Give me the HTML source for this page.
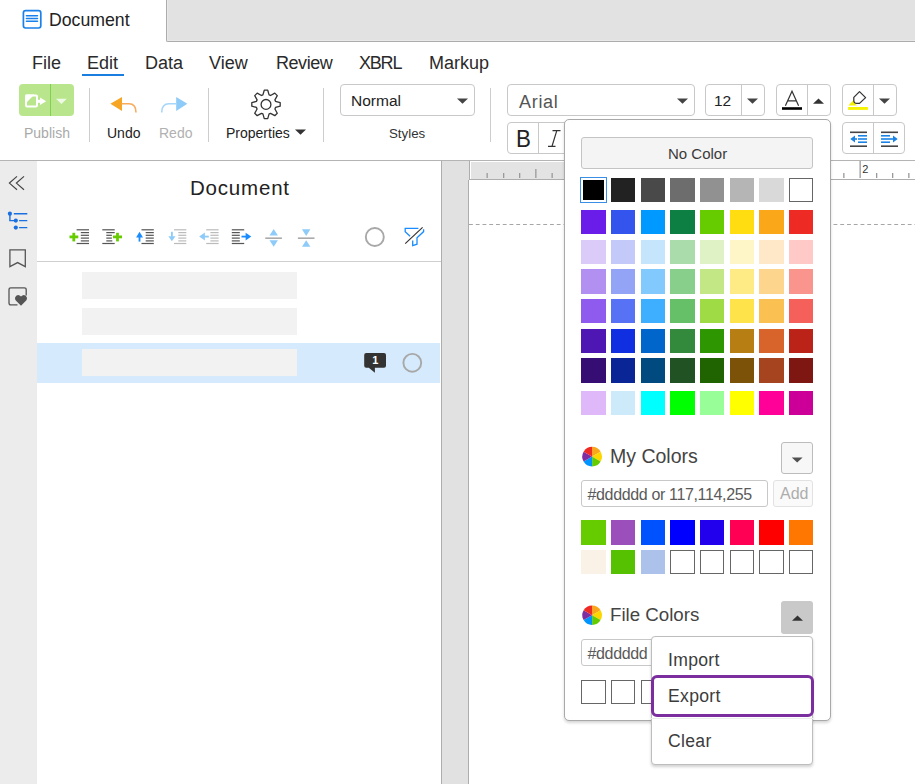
<!DOCTYPE html>
<html><head><meta charset="utf-8">
<style>
*{box-sizing:border-box;margin:0;padding:0}
html,body{width:915px;height:784px;overflow:hidden;background:#fff;font-family:"Liberation Sans",sans-serif;color:#222}
.a{position:absolute}
.t{position:absolute;white-space:nowrap;line-height:1}
.box{position:absolute;border:1px solid #c8c8c8;border-radius:4px;background:#fff}
.sep{position:absolute;width:1.4px;background:#cdcdcd}
.sw{position:absolute;width:25px;height:25px}
</style></head><body>

<!-- top tab strip -->
<div class="a" style="left:166px;top:0;width:749px;height:42px;background:#e2e2e2;border-left:1px solid #acacac;border-bottom:1px solid #acacac;border-bottom-left-radius:2px;box-shadow:inset 1px -1px 0 #e9e9e9"></div>
<svg class="a" style="left:18px;top:6px" width="28" height="26" viewBox="18 6 28 26">
<rect x="23.4" y="10.7" width="17.4" height="17.3" rx="2.2" fill="none" stroke="#1a80ea" stroke-width="1.7"/>
<path d="M26.4 15.8 L37.5 15.8 M26.4 18.6 L37.5 18.6 M26.4 21.3 L37.5 21.3" stroke="#1a80ea" stroke-width="1.5" stroke-linecap="round"/>
</svg>
<div class="t" style="left:49px;top:12px;font-size:17.7px;color:#222">Document</div>

<!-- menu -->
<div class="t" style="left:32px;top:54px;font-size:18px;color:#2a2a2a">File</div>
<div class="t" style="left:87px;top:54px;font-size:18px;color:#2a2a2a">Edit</div>
<div class="a" style="left:82px;top:74px;width:42px;height:2px;background:#1a7ee0"></div>
<div class="t" style="left:145px;top:54px;font-size:18px;color:#2a2a2a">Data</div>
<div class="t" style="left:209px;top:54px;font-size:18px;color:#2a2a2a">View</div>
<div class="t" style="left:276px;top:54px;font-size:18px;letter-spacing:-0.45px;color:#2a2a2a">Review</div>
<div class="t" style="left:359px;top:54px;font-size:18px;letter-spacing:-1.2px;color:#2a2a2a">XBRL</div>
<div class="t" style="left:429px;top:54px;font-size:18px;color:#2a2a2a">Markup</div>

<!-- toolbar -->
<div id="toolbar">
<!-- publish -->
<div class="a" style="left:19px;top:84px;width:55px;height:32px;background:#b9e68d;border-radius:4px"></div>
<div class="a" style="left:50px;top:84px;width:1px;height:32px;background:#7fd34c"></div>
<svg class="a" style="left:19px;top:84px" width="55" height="32" viewBox="0 0 55 32">
<rect x="7" y="11.4" width="11" height="11" rx="0.8" fill="none" stroke="#fff" stroke-width="2"/>
<path d="M6.5 19.4 L6.5 10.5 L15.4 10.5 Z" fill="#fff"/>
<rect x="18.5" y="15.8" width="3" height="3" fill="#fff"/>
<path d="M21 13.6 L27.2 17.3 L21 21 Z" fill="#fff"/>
<path d="M37 14.8 L47.8 14.8 L42.4 19.9 Z" fill="#eef9e6"/>
</svg>
<div class="t" style="left:24px;top:126px;font-size:14px;color:#a9a9a9">Publish</div>
<div class="sep" style="left:88.8px;top:88px;height:54px"></div>
<!-- undo redo -->
<svg class="a" style="left:105px;top:92px" width="90" height="24" viewBox="0 0 90 24">
<path d="M5.4 11.8 L17 5 L17 19 Z" fill="#f6a623"/>
<path d="M16.5 11.8 L24 11.8 Q31 11.8 31 20.5" fill="none" stroke="#f8ab5a" stroke-width="1.6"/>
<path d="M82.4 11.8 L71.2 5 L71.2 19 Z" fill="#8ecbf8"/>
<path d="M71.5 11.8 L64 11.8 Q56.7 11.8 56.7 20.5" fill="none" stroke="#a6d6fa" stroke-width="1.6"/>
</svg>
<div class="t" style="left:107px;top:126px;font-size:14px;color:#222">Undo</div>
<div class="t" style="left:159px;top:126px;font-size:14px;color:#b1b1b1">Redo</div>
<div class="sep" style="left:207.6px;top:88px;height:54px"></div>
<!-- properties -->
<svg class="a" style="left:246px;top:85px" width="40" height="40" viewBox="-20 -19.4 40 40">
<path d="M-3.09 -9.51 L-1.74 -14.19 L1.74 -14.19 L3.09 -9.51 A10.0 10.0 0 0 1 4.54 -8.91 L8.80 -11.27 L11.27 -8.80 L8.91 -4.54 A10.0 10.0 0 0 1 9.51 -3.09 L14.19 -1.74 L14.19 1.74 L9.51 3.09 A10.0 10.0 0 0 1 8.91 4.54 L11.27 8.80 L8.80 11.27 L4.54 8.91 A10.0 10.0 0 0 1 3.09 9.51 L1.74 14.19 L-1.74 14.19 L-3.09 9.51 A10.0 10.0 0 0 1 -4.54 8.91 L-8.80 11.27 L-11.27 8.80 L-8.91 4.54 A10.0 10.0 0 0 1 -9.51 3.09 L-14.19 1.74 L-14.19 -1.74 L-9.51 -3.09 A10.0 10.0 0 0 1 -8.91 -4.54 L-11.27 -8.80 L-8.80 -11.27 L-4.54 -8.91 A10.0 10.0 0 0 1 -3.09 -9.51Z" fill="none" stroke="#333" stroke-width="1.3" stroke-linejoin="round"/>
<circle cx="0" cy="0" r="4.9" fill="none" stroke="#333" stroke-width="1.3"/>
</svg>
<div class="t" style="left:226px;top:126px;font-size:14px;color:#222">Properties</div>
<svg class="a" style="left:294px;top:128px" width="13" height="8" viewBox="0 0 13 8"><path d="M1 1.5 L12 1.5 L6.5 6.8Z" fill="#333"/></svg>
<div class="sep" style="left:322.6px;top:88px;height:54px"></div>
<!-- styles -->
<div class="box" style="left:340px;top:84px;width:135px;height:32px"></div>
<div class="t" style="left:351px;top:92.5px;font-size:15.5px;color:#222">Normal</div>
<svg class="a" style="left:456px;top:97px" width="13" height="8" viewBox="0 0 13 8"><path d="M1 1.5 L12 1.5 L6.5 6.8Z" fill="#444"/></svg>
<div class="t" style="left:389px;top:127px;font-size:13.3px;color:#333">Styles</div>
<div class="sep" style="left:490px;top:88px;height:54px"></div>
<!-- font -->
<div class="box" style="left:507px;top:84px;width:188px;height:32px"></div>
<div class="t" style="left:519px;top:92.5px;font-size:18px;letter-spacing:0.7px;color:#555">Arial</div>
<svg class="a" style="left:676px;top:97px" width="13" height="8" viewBox="0 0 13 8"><path d="M1 1.5 L12 1.5 L6.5 6.8Z" fill="#444"/></svg>
<div class="box" style="left:705px;top:84px;width:60px;height:32px"></div>
<div class="a" style="left:741px;top:85px;width:1px;height:30px;background:#c8c8c8"></div>
<div class="t" style="left:714px;top:93px;font-size:15.5px;color:#222">12</div>
<svg class="a" style="left:746px;top:97px" width="13" height="8" viewBox="0 0 13 8"><path d="M1 1.5 L12 1.5 L6.5 6.8Z" fill="#444"/></svg>
<!-- font color -->
<div class="box" style="left:776px;top:84px;width:55px;height:32px"></div>
<div class="a" style="left:807px;top:85px;width:1px;height:30px;background:#c8c8c8"></div>
<svg class="a" style="left:780px;top:88px" width="26" height="24" viewBox="0 0 26 24">
<path d="M5.4 17.7 L12 3.2 L18.6 17.7 M7.7 12.9 L16.3 12.9" fill="none" stroke="#333" stroke-width="1.2"/>
<rect x="2" y="19.2" width="20" height="2.6" fill="#000"/>
</svg>
<svg class="a" style="left:812px;top:97px" width="13" height="8" viewBox="0 0 13 8"><path d="M1 6.8 L12 6.8 L6.5 1.6Z" fill="#333"/></svg>
<!-- highlight -->
<div class="box" style="left:842px;top:84px;width:55px;height:32px"></div>
<div class="a" style="left:873px;top:85px;width:1px;height:30px;background:#c8c8c8"></div>
<svg class="a" style="left:846px;top:88px" width="26" height="24" viewBox="0 0 26 24">
<path d="M2.4 17.6 L7.8 11.8 Q8.4 16.2 11.2 17.6 Z" fill="#f4f000"/>
<path d="M13.5 3.6 L19.6 9.6 L13.5 15.4 L10.9 15.4 Q7.8 15.4 7.8 12.2 L7.8 9.4 Z" fill="none" stroke="#333" stroke-width="1.25" stroke-linejoin="round"/>
<rect x="2.1" y="19" width="19.8" height="2.9" fill="#f6f300"/>
</svg>
<svg class="a" style="left:878px;top:97px" width="13" height="8" viewBox="0 0 13 8"><path d="M1 1.5 L12 1.5 L6.5 6.8Z" fill="#444"/></svg>
<!-- B I -->
<div class="box" style="left:507px;top:122px;width:80px;height:32px"></div>
<div class="a" style="left:538px;top:123px;width:1px;height:30px;background:#c8c8c8"></div>
<div class="t" style="left:515.8px;top:128.2px;font-size:23.5px;color:#222;transform:scaleX(0.95);transform-origin:0 0">B</div>
<svg class="a" style="left:545px;top:128px" width="20" height="22" viewBox="0 0 20 22">
<path d="M7.5 2.6 L15.5 2.6 M3 18.3 L10.5 18.3 M11.8 2.6 L7 18.3" fill="none" stroke="#333" stroke-width="1.2"/>
</svg>
<!-- indent -->
<div class="box" style="left:842px;top:122px;width:63px;height:32px"></div>
<div class="a" style="left:873px;top:123px;width:1px;height:30px;background:#c8c8c8"></div>
<svg class="a" style="left:842px;top:122px" width="63" height="32" viewBox="0 0 63 32">
<rect x="8" y="9.5" width="17" height="1.6" fill="#444"/>
<rect x="8" y="23.4" width="17" height="1.6" fill="#444"/>
<path d="M8.3 17 L13 13.6 L13 20.4Z" fill="#1a84e6"/>
<rect x="12" y="16.2" width="3" height="1.6" fill="#1a84e6"/>
<rect x="16" y="13" width="9" height="1.6" fill="#1a84e6"/>
<rect x="16" y="16.2" width="9" height="1.6" fill="#1a84e6"/>
<rect x="16" y="19.4" width="9" height="1.6" fill="#1a84e6"/>
<rect x="39" y="9.5" width="17" height="1.6" fill="#444"/>
<rect x="39" y="23.4" width="17" height="1.6" fill="#444"/>
<rect x="39" y="13" width="9" height="1.6" fill="#1a84e6"/>
<rect x="39" y="16.2" width="9" height="1.6" fill="#1a84e6"/>
<rect x="39" y="19.4" width="9" height="1.6" fill="#1a84e6"/>
<rect x="48" y="16.2" width="3" height="1.6" fill="#1a84e6"/>
<path d="M55.7 17 L51 13.6 L51 20.4Z" fill="#1a84e6"/>
</svg>
</div>

<!-- main border -->
<div class="a" style="left:0;top:160px;width:915px;height:1px;background:#b4b4b4"></div>
<!-- sidebar -->
<div class="a" style="left:0;top:161px;width:37px;height:623px;background:#ececec"></div>
<svg class="a" style="left:0;top:161px" width="37" height="160" viewBox="0 161 37 160">
<path d="M17 176.4 L9.4 183.1 L17 189.8 M24 176.4 L16.4 183.1 L24 189.8" fill="none" stroke="#444" stroke-width="1.2"/>
<g fill="#1a6fe0" stroke="#1a6fe0">
<circle cx="9.9" cy="213.7" r="2.1" stroke="none"/>
<circle cx="15.8" cy="220.6" r="2.1" stroke="none"/>
<circle cx="15.8" cy="227.6" r="2.1" stroke="none"/>
<path d="M13.8 213.7 L27.3 213.7 M19.1 220.6 L27.3 220.6 M19.1 227.6 L27.3 227.6 M9.9 213.7 L9.9 220.6 L15 220.6" fill="none" stroke-width="1.4"/>
</g>
<path d="M9.9 249.9 L25.3 249.9 L25.3 266.6 L17.6 262.6 L9.9 266.6 Z" fill="none" stroke="#555" stroke-width="1.3" stroke-linejoin="miter"/>
<path d="M17.5 304.9 L10.9 304.9 Q9 304.9 9 303 L9 289.7 Q9 287.9 10.9 287.9 L24.3 287.9 Q26.2 287.9 26.2 289.7 L26.2 295.5" fill="none" stroke="#555" stroke-width="1.3"/>
<path d="M21 305.8 L15.8 300.4 Q14.6 299 15.1 297.4 Q15.8 295.2 18.1 295.1 Q19.8 295.1 21 296.6 Q22.2 295.1 23.9 295.1 Q26.2 295.2 26.9 297.4 Q27.4 299 26.2 300.4 Z" fill="#555"/>
</svg>

<!-- panel -->
<div id="panel">
<div class="t" style="left:190px;top:177.5px;font-size:20.5px;letter-spacing:0.8px;color:#222">Document</div>
<svg class="a" style="left:37px;top:220px" width="403" height="32" viewBox="37 220 403 32">
<g fill="#555">
<rect x="76.6" y="229.2" width="12.4" height="1.2"/><rect x="80.8" y="232" width="8.2" height="1.2"/><rect x="80.8" y="234.7" width="8.2" height="1.2"/><rect x="80.8" y="237.5" width="8.2" height="1.2"/><rect x="80.8" y="240.3" width="8.2" height="1.2"/><rect x="76.6" y="242.9" width="12.4" height="1.2"/>
<rect x="102.3" y="229.2" width="12.4" height="1.2"/><rect x="106.3" y="232" width="8.4" height="1.2"/><rect x="106.3" y="234.7" width="5.6" height="1.2"/><rect x="106.3" y="237.5" width="5.6" height="1.2"/><rect x="106.3" y="240.3" width="6" height="1.2"/><rect x="102.3" y="242.9" width="12.4" height="1.2"/>
<rect x="141.5" y="229.2" width="12.3" height="1.2"/><rect x="145.7" y="232" width="8.1" height="1.2"/><rect x="145.7" y="234.7" width="8.1" height="1.2"/><rect x="145.7" y="237.5" width="8.1" height="1.2"/><rect x="145.7" y="240.3" width="8.1" height="1.2"/><rect x="141.5" y="242.9" width="12.3" height="1.2"/>
<rect x="231.8" y="229.2" width="12.4" height="1.2"/><rect x="231.8" y="232" width="8" height="1.2"/><rect x="231.8" y="234.7" width="8" height="1.2"/><rect x="231.8" y="237.5" width="8" height="1.2"/><rect x="231.8" y="240.3" width="8" height="1.2"/><rect x="231.8" y="242.9" width="12.4" height="1.2"/>
</g>
<g fill="#bbb">
<rect x="174" y="229.2" width="12.3" height="1.2"/><rect x="178.3" y="232" width="8" height="1.2"/><rect x="178.3" y="234.7" width="8" height="1.2"/><rect x="178.3" y="237.5" width="8" height="1.2"/><rect x="178.3" y="240.3" width="8" height="1.2"/><rect x="174" y="242.9" width="12.3" height="1.2"/>
<rect x="206.2" y="229.2" width="12.4" height="1.2"/><rect x="210.4" y="232" width="8.2" height="1.2"/><rect x="210.4" y="234.7" width="8.2" height="1.2"/><rect x="210.4" y="237.5" width="8.2" height="1.2"/><rect x="210.4" y="240.3" width="8.2" height="1.2"/><rect x="206.2" y="242.9" width="12.4" height="1.2"/>
</g>
<g fill="#66cc00">
<rect x="69.5" y="235.5" width="8.8" height="2.8"/><rect x="72.4" y="232.8" width="2.8" height="8.6"/>
<rect x="113" y="235.5" width="9" height="2.8"/><rect x="116.1" y="232.8" width="2.8" height="8.6"/>
</g>
<g fill="#1a8cff">
<path d="M139.5 231.8 L143 237.4 L136.1 237.4Z"/><rect x="138.6" y="236" width="1.8" height="5.6"/>
<path d="M251.3 236.6 L245.6 240.4 L245.6 232.8Z"/><rect x="241.5" y="235.7" width="4.5" height="1.8"/>
</g>
<g fill="#8ecbf8">
<path d="M171.9 241.2 L175.4 236.2 L168.4 236.2Z"/><rect x="171" y="231.8" width="1.8" height="5"/>
<path d="M199.2 236.6 L204.9 232.6 L204.9 240.6Z"/><rect x="204" y="235.7" width="4.8" height="1.8"/>
<path d="M273.7 229 L277.9 235.6 L269.5 235.6Z"/><path d="M273.7 246.8 L277.9 240.2 L269.5 240.2Z"/>
<path d="M306.2 236 L310.4 229.2 L302 229.2Z"/><path d="M306.2 240.2 L310.4 246.8 L302 246.8Z"/>
</g>
<g fill="#aaa"><rect x="265.3" y="237.4" width="16.6" height="1.6"/><rect x="297.9" y="237.4" width="16.6" height="1.6"/></g>
<circle cx="374.8" cy="237" r="9" fill="none" stroke="#a8a8a8" stroke-width="1.9"/>
<g fill="none" stroke="#1a8cff" stroke-width="1.3" stroke-linejoin="miter">
<path d="M410.1 236.2 L405.2 231.6 L405.2 228.3 L418.4 228.3"/>
<path d="M423.6 229.3 L423.6 231.6 L417 237.7 L417 244.2 L412.7 245.6 L412.7 240.4"/>
</g>
<path d="M405.2 243.6 L422.6 227.4" stroke="#333" stroke-width="1.2"/>
</svg>
<div class="a" style="left:37px;top:261px;width:404px;height:1px;background:#cfcfcf"></div>
<div class="a" style="left:82px;top:272px;width:215px;height:27px;background:#f2f2f2"></div>
<div class="a" style="left:82px;top:308px;width:215px;height:27px;background:#f2f2f2"></div>
<div class="a" style="left:37px;top:343px;width:403px;height:40px;background:#d5eafc"></div>
<div class="a" style="left:82px;top:349px;width:215px;height:27px;background:#f2f2f2"></div>
<svg class="a" style="left:360px;top:345px" width="70" height="35" viewBox="360 345 70 35">
<path d="M366.2 353 L384 353 Q386 353 386 355 L386 365.8 Q386 367.8 384 367.8 L374.9 367.8 L374.9 372.7 L368.8 367.8 L366.2 367.8 Q364.2 367.8 364.2 365.8 L364.2 355 Q364.2 353 366.2 353Z" fill="#333"/>
<circle cx="412.3" cy="362.8" r="8.9" fill="none" stroke="#a8a8a8" stroke-width="1.9"/>
</svg>
<div class="t" style="left:372.3px;top:355.3px;font-size:11px;font-weight:bold;color:#fff">1</div>
</div>

<!-- doc area -->
<div class="a" style="left:441px;top:161px;width:1px;height:623px;background:#adadad"></div>
<div class="a" style="left:442px;top:161px;width:27px;height:623px;background:#e1e1e1"></div>
<div class="a" style="left:468px;top:180px;width:1px;height:604px;background:#adadad"></div>
<div id="doc">
<div class="a" style="left:469px;top:161px;width:1px;height:19px;background:#adadad"></div>
<div class="a" style="left:471px;top:162px;width:130px;height:17px;background:#e3e3e3"></div>
<div class="a" style="left:469px;top:179px;width:446px;height:1px;background:#adadad"></div>
<svg class="a" style="left:471px;top:161px" width="444" height="20" viewBox="471 161 444 20">
<g fill="#9a9a9a">
<rect x="486.5" y="173" width="1.3" height="5"/><rect x="503" y="173" width="1.3" height="5"/><rect x="519" y="173" width="1.3" height="5"/><rect x="535.2" y="169" width="1.3" height="9"/><rect x="551.5" y="173" width="1.3" height="5"/>
<rect x="843.2" y="173" width="1.3" height="5"/><rect x="859.5" y="161" width="1.3" height="17"/><rect x="876" y="173" width="1.3" height="5"/><rect x="892" y="173" width="1.3" height="5"/><rect x="908.2" y="173" width="1.3" height="5"/>
</g>
</svg>
<div class="t" style="left:862.3px;top:164px;font-size:11px;color:#333">2</div>
<div class="a" style="left:469px;top:224px;width:446px;height:1.2px;background-image:linear-gradient(90deg,#a6a6a6 0 4px,transparent 4px 6.75px);background-size:6.75px 1.2px"></div>
</div>

<!-- popup -->
<div id="popup">
<div class="a" style="left:564px;top:119px;width:267px;height:602px;background:#fff;border:1px solid #a9a9a9;border-radius:5px;box-shadow:0 2px 3px rgba(0,0,0,.16)"></div>
<div class="a" style="left:581px;top:137px;width:232px;height:32px;background:#f4f4f4;border:1px solid #c4c4c4;border-radius:3px"></div>
<div class="t" style="left:668px;top:146px;font-size:15px;color:#3a3a3a">No Color</div>
<svg class="a" style="left:565px;top:120px" width="265" height="600" viewBox="565 120 265 600"><rect x="580.5" y="177.5" width="26" height="25" fill="#fff" stroke="#3a8ee6" stroke-width="1"/><rect x="583" y="180" width="21" height="20" fill="#000"/><rect x="611" y="178" width="24" height="24" fill="#222222"/><rect x="641" y="178" width="24" height="24" fill="#494949"/><rect x="670" y="178" width="25" height="24" fill="#6d6d6d"/><rect x="700" y="178" width="24" height="24" fill="#919191"/><rect x="730" y="178" width="24" height="24" fill="#b5b5b5"/><rect x="759" y="178" width="25" height="24" fill="#d9d9d9"/><rect x="789.5" y="178.5" width="23" height="23" fill="#fff" stroke="#666" stroke-width="1"/><rect x="581" y="210" width="25" height="24" fill="#6a1de8"/><rect x="611" y="210" width="24" height="24" fill="#3355ee"/><rect x="641" y="210" width="24" height="24" fill="#0099ff"/><rect x="670" y="210" width="25" height="24" fill="#0e7f42"/><rect x="700" y="210" width="24" height="24" fill="#66cc00"/><rect x="730" y="210" width="24" height="24" fill="#ffdd11"/><rect x="759" y="210" width="25" height="24" fill="#faa81a"/><rect x="789" y="210" width="24" height="24" fill="#ee2a25"/><rect x="581" y="240" width="25" height="24" fill="#dacbf8"/><rect x="611" y="240" width="24" height="24" fill="#c3cafa"/><rect x="641" y="240" width="24" height="24" fill="#c5e5fd"/><rect x="670" y="240" width="25" height="24" fill="#aadcab"/><rect x="700" y="240" width="24" height="24" fill="#dff2c6"/><rect x="730" y="240" width="24" height="24" fill="#fef6c6"/><rect x="759" y="240" width="25" height="24" fill="#fee8c8"/><rect x="789" y="240" width="24" height="24" fill="#fec9c6"/><rect x="581" y="269" width="25" height="25" fill="#b290f2"/><rect x="611" y="269" width="24" height="25" fill="#93a4f7"/><rect x="641" y="269" width="24" height="25" fill="#82c9fd"/><rect x="670" y="269" width="25" height="25" fill="#88cf8b"/><rect x="700" y="269" width="24" height="25" fill="#c2e784"/><rect x="730" y="269" width="24" height="25" fill="#feeb85"/><rect x="759" y="269" width="25" height="25" fill="#fdd58d"/><rect x="789" y="269" width="24" height="25" fill="#f9958c"/><rect x="581" y="299" width="25" height="24" fill="#8f5bef"/><rect x="611" y="299" width="24" height="24" fill="#5872f5"/><rect x="641" y="299" width="24" height="24" fill="#3eaeff"/><rect x="670" y="299" width="25" height="24" fill="#66c068"/><rect x="700" y="299" width="24" height="24" fill="#9edb44"/><rect x="730" y="299" width="24" height="24" fill="#fee44a"/><rect x="759" y="299" width="25" height="24" fill="#fbc052"/><rect x="789" y="299" width="24" height="24" fill="#f5615a"/><rect x="581" y="329" width="25" height="24" fill="#4e17b4"/><rect x="611" y="329" width="24" height="24" fill="#0f2fe0"/><rect x="641" y="329" width="24" height="24" fill="#0066cc"/><rect x="670" y="329" width="25" height="24" fill="#348a3c"/><rect x="700" y="329" width="24" height="24" fill="#2e9600"/><rect x="730" y="329" width="24" height="24" fill="#b77e14"/><rect x="759" y="329" width="25" height="24" fill="#d8632b"/><rect x="789" y="329" width="24" height="24" fill="#bb2218"/><rect x="581" y="358" width="25" height="25" fill="#360e73"/><rect x="611" y="358" width="24" height="25" fill="#0a2596"/><rect x="641" y="358" width="24" height="25" fill="#004a7f"/><rect x="670" y="358" width="25" height="25" fill="#215224"/><rect x="700" y="358" width="24" height="25" fill="#1f6400"/><rect x="730" y="358" width="24" height="25" fill="#7c5209"/><rect x="759" y="358" width="25" height="25" fill="#a5441f"/><rect x="789" y="358" width="24" height="25" fill="#7e1611"/><rect x="581" y="391" width="25" height="24" fill="#dfb8f9"/><rect x="611" y="391" width="24" height="24" fill="#cdeafb"/><rect x="641" y="391" width="24" height="24" fill="#00ffff"/><rect x="670" y="391" width="25" height="24" fill="#00ff00"/><rect x="700" y="391" width="24" height="24" fill="#98ff98"/><rect x="730" y="391" width="24" height="24" fill="#ffff00"/><rect x="759" y="391" width="25" height="24" fill="#ff0099"/><rect x="789" y="391" width="24" height="24" fill="#cc0099"/><rect x="581" y="520" width="25" height="25" fill="#66cc00"/><rect x="611" y="520" width="24" height="25" fill="#9b4fbb"/><rect x="641" y="520" width="24" height="25" fill="#0052ff"/><rect x="670" y="520" width="25" height="25" fill="#0000ff"/><rect x="700" y="520" width="24" height="25" fill="#2200ee"/><rect x="730" y="520" width="24" height="25" fill="#ff0055"/><rect x="759" y="520" width="25" height="25" fill="#ff0000"/><rect x="789" y="520" width="24" height="25" fill="#ff7700"/><rect x="581" y="550" width="25" height="24" fill="#faf2e6"/><rect x="611" y="550" width="24" height="24" fill="#55c100"/><rect x="641" y="550" width="24" height="24" fill="#adc2ea"/><rect x="670.5" y="550.5" width="24" height="23" fill="#fff" stroke="#666" stroke-width="1"/><rect x="700.5" y="550.5" width="23" height="23" fill="#fff" stroke="#666" stroke-width="1"/><rect x="730.5" y="550.5" width="23" height="23" fill="#fff" stroke="#666" stroke-width="1"/><rect x="759.5" y="550.5" width="24" height="23" fill="#fff" stroke="#666" stroke-width="1"/><rect x="789.5" y="550.5" width="23" height="23" fill="#fff" stroke="#666" stroke-width="1"/><rect x="581.5" y="680.5" width="24" height="23" fill="#fff" stroke="#666" stroke-width="1"/><rect x="611.5" y="680.5" width="23" height="23" fill="#fff" stroke="#666" stroke-width="1"/><rect x="641.5" y="680.5" width="23" height="23" fill="#fff" stroke="#666" stroke-width="1"/><rect x="670.5" y="680.5" width="24" height="23" fill="#fff" stroke="#666" stroke-width="1"/><rect x="700.5" y="680.5" width="23" height="23" fill="#fff" stroke="#666" stroke-width="1"/><rect x="730.5" y="680.5" width="23" height="23" fill="#fff" stroke="#666" stroke-width="1"/><rect x="759.5" y="680.5" width="24" height="23" fill="#fff" stroke="#666" stroke-width="1"/><rect x="789.5" y="680.5" width="23" height="23" fill="#fff" stroke="#666" stroke-width="1"/><g transform="translate(592.1 456.6)"><path d="M0 0 L0.00 -9.80 A9.8 9.8 0 0 1 8.49 -4.90 Z" fill="#f9a61a"/><path d="M0 0 L8.49 -4.90 A9.8 9.8 0 0 1 8.49 4.90 Z" fill="#fdd600"/><path d="M0 0 L8.49 4.90 A9.8 9.8 0 0 1 0.00 9.80 Z" fill="#66cc00"/><path d="M0 0 L0.00 9.80 A9.8 9.8 0 0 1 -8.49 4.90 Z" fill="#0094ff"/><path d="M0 0 L-8.49 4.90 A9.8 9.8 0 0 1 -8.49 -4.90 Z" fill="#7f2da0"/><path d="M0 0 L-8.49 -4.90 A9.8 9.8 0 0 1 -0.00 -9.80 Z" fill="#ee2a24"/></g><g transform="translate(592.1 615.2)"><path d="M0 0 L0.00 -9.80 A9.8 9.8 0 0 1 8.49 -4.90 Z" fill="#f9a61a"/><path d="M0 0 L8.49 -4.90 A9.8 9.8 0 0 1 8.49 4.90 Z" fill="#fdd600"/><path d="M0 0 L8.49 4.90 A9.8 9.8 0 0 1 0.00 9.80 Z" fill="#66cc00"/><path d="M0 0 L0.00 9.80 A9.8 9.8 0 0 1 -8.49 4.90 Z" fill="#0094ff"/><path d="M0 0 L-8.49 4.90 A9.8 9.8 0 0 1 -8.49 -4.90 Z" fill="#7f2da0"/><path d="M0 0 L-8.49 -4.90 A9.8 9.8 0 0 1 -0.00 -9.80 Z" fill="#ee2a24"/></g></svg>
<div class="t" style="left:610px;top:446.5px;font-size:19.5px;color:#444">My Colors</div>
<div class="a" style="left:781px;top:442px;width:32px;height:32px;background:#f7f7f7;border:1px solid #bcbcbc;border-radius:3px"></div>
<svg class="a" style="left:790px;top:455.5px" width="14" height="8" viewBox="0 0 14 8"><path d="M1.8 1.5 L12.6 1.5 L7.2 6.6Z" fill="#505050"/></svg>
<div class="a" style="left:581px;top:480px;width:187px;height:27px;background:#fff;border:1px solid #c8c8c8;border-radius:3px"></div>
<div class="t" style="left:587.5px;top:486.6px;font-size:16px;letter-spacing:-0.35px;color:#5a5a5a">#dddddd or 117,114,255</div>
<div class="a" style="left:773px;top:480px;width:40px;height:27px;background:#fafafa;border:1px solid #e2e2e2;border-radius:3px"></div>
<div class="t" style="left:780px;top:486px;font-size:16px;color:#adadad">Add</div>
<div class="t" style="left:610px;top:606.3px;font-size:18.7px;color:#444">File Colors</div>
<div class="a" style="left:781px;top:601px;width:32px;height:33px;background:#c9c9c9;border-radius:3px"></div>
<svg class="a" style="left:790px;top:614px" width="14" height="8" viewBox="0 0 14 8"><path d="M2 6.8 L13 6.8 L7.5 1.5Z" fill="#333"/></svg>
<div class="a" style="left:581px;top:639px;width:187px;height:27px;background:#fff;border:1px solid #c8c8c8;border-radius:3px"></div>
<div class="t" style="left:587.5px;top:645.6px;font-size:16px;letter-spacing:-0.35px;color:#5a5a5a">#dddddd or 117,114,255</div>
<div class="a" style="left:651px;top:636px;width:162px;height:129px;background:#fff;border:1px solid #bdbdbd;border-radius:4px;box-shadow:0 2px 3px rgba(0,0,0,.18)"></div>
<div class="t" style="left:668px;top:652px;font-size:17.6px;letter-spacing:0.3px;color:#3c3c3c">Import</div>
<div class="a" style="left:651px;top:717.5px;width:162px;height:1px;background:#ececec"></div>
<div class="a" style="left:651px;top:675px;width:163px;height:42px;border:3px solid #7b2f9e;border-radius:6px;background:#fff"></div>
<div class="t" style="left:668px;top:687.5px;font-size:17.6px;letter-spacing:0.3px;color:#3c3c3c">Export</div>
<div class="t" style="left:668px;top:732.5px;font-size:17.6px;letter-spacing:0.3px;color:#3c3c3c">Clear</div>
</div>

</body></html>
